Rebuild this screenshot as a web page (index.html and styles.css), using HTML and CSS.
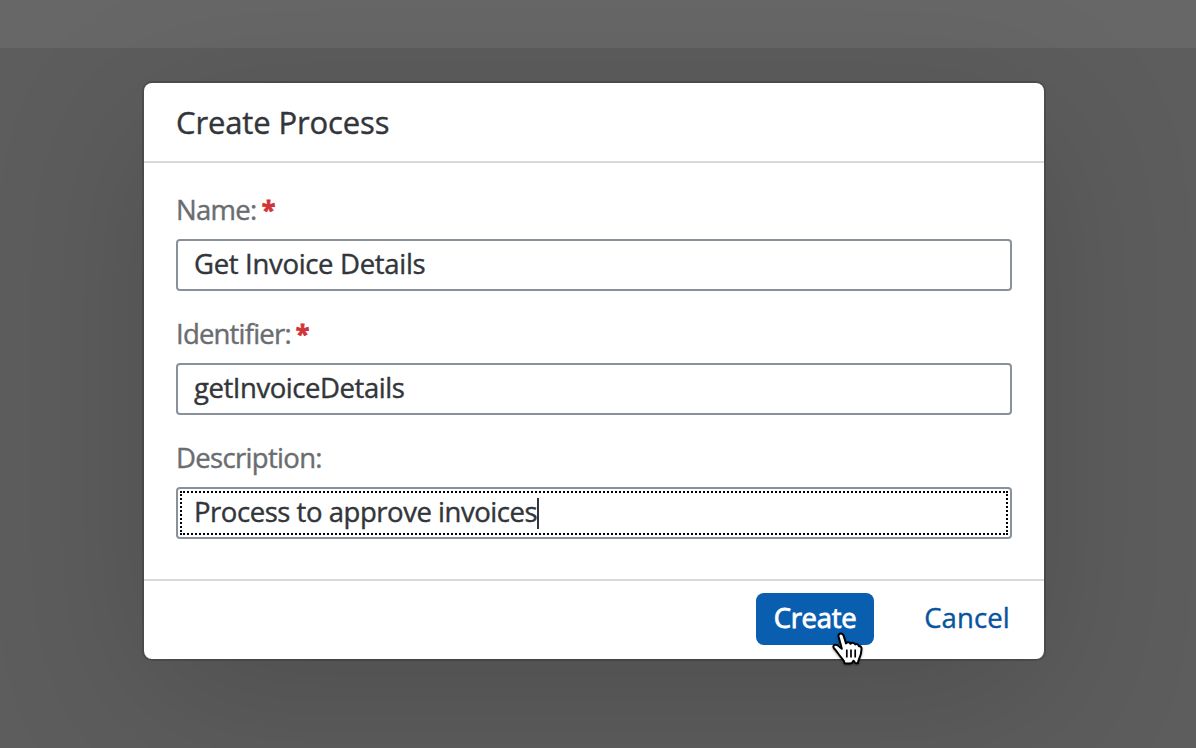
FILE: index.html
```html
<!DOCTYPE html>
<html lang="en">
<head>
<meta charset="utf-8">
<title>Create Process</title>
<link rel="stylesheet" href="styles.css">
</head>
<body>
<div class="shell-bar"></div>
<main class="page">
  <section class="dialog" role="dialog" aria-labelledby="title">
    <header class="dialog-header"><h1 class="title" id="title">Create Process</h1></header>
    <div class="dialog-body">
      <div class="field">
        <div class="label"><span class="text-name">Name:</span><span class="required">*</span></div>
        <div class="input"><span class="value value-name">Get Invoice Details</span></div>
      </div>
      <div class="field">
        <div class="label"><span class="text-identifier">Identifier:</span><span class="required">*</span></div>
        <div class="input"><span class="value value-identifier">getInvoiceDetails</span></div>
      </div>
      <div class="field">
        <div class="label"><span class="text-description">Description:</span></div>
        <div class="input focused"><span class="value value-description">Process to approve invoices</span><span class="caret"></span></div>
      </div>
    </div>
    <footer class="dialog-footer">
      <div class="button primary"><span class="text-create">Create</span>
        <svg class="pointer" width="38" height="42" viewBox="0 0 38 42">
          <path d="M12.800 5.500C14.500 5.500 15.300 6.700 15.800 8.300L18 15.400C19 13.700 21.800 13.900 22.500 15.800C23.800 14.300 26.600 14.700 27.300 16.500C28.700 15.600 30.600 16.400 31 18.200C32.800 17.800 33.600 19.200 33.500 21.200C33.300 25.300 32.800 27 31.600 29.600C30.800 31.400 30 32.800 30 35C28.700 35.500 27.500 35.300 26.900 34.500C26.200 33.500 25.900 32.800 25.500 32.800S24.800 34.500 23.800 35C21.600 35.600 19 35.700 16.600 35.200C16.600 33 15.200 32 13.900 30.400C11.200 27.300 9.700 24.700 7.400 21.900C5.800 20 5 19.500 5.400 18.200C6 16.300 8.600 16.400 10.600 18L13.800 20.800L10.700 9C10.100 7.200 11 5.500 12.800 5.500Z" fill="#fff" stroke="#000" stroke-width="2" stroke-linejoin="round"/>
          <path d="M18.800 21.500v8M23 21.500v8M27.200 21.500v8" stroke="#000" stroke-width="1.700" fill="none"/>
        </svg>
      </div>
      <div class="button"><span class="text-cancel">Cancel</span></div>
    </footer>
  </section>
</main>
</body>
</html>
```
FILE: styles.css
```css
* { box-sizing: border-box; }
body {
  margin: 0;
  height: 748px;
  overflow: hidden;
  background: #5d5d5d;
  font-family: "Open Sans", sans-serif;
  font-size: 27.5px;
  color: #32363a;
  -webkit-text-stroke: .4px currentColor;
}
.shell-bar { height: 48px; background: #676767; }
.page { display: flex; padding: 35px 0 0 144px; }
.dialog {
  width: 900px;
  height: 576px;
  display: flex;
  flex-direction: column;
  background: #fff;
  border-radius: 8px;
  box-shadow: 0 0 0 2px rgba(0,0,0,.15), 0 40px 160px rgba(0,0,0,.16);
}
.dialog-header { height: 80px; padding: 0 32px; border-bottom: 2px solid #d9d9d9; }
.title { margin: 0; font-size: 31px; font-weight: 400; line-height: 78px; letter-spacing: -.12px; white-space: nowrap; }
.dialog-body { flex: 1; padding: 24px 32px 0; display: flex; flex-direction: column; gap: 20px; }
.label { height: 52px; line-height: 46px; color: #6a6d70; display: flex; gap: 5px; white-space: nowrap; }
.text-name { letter-spacing: -.7px; }
.text-identifier { letter-spacing: -.8px; }
.text-description { letter-spacing: -.68px; }
.required { color: #d13438; font-size: 25px; line-height: 44px; font-weight: 700; -webkit-text-stroke: .8px currentColor; }
.input { height: 52px; display: flex; align-items: center; padding-left: 16px; border: 2px solid #89919a; border-radius: 4px; position: relative; white-space: nowrap; }
.value { padding-bottom: 4px; }
.value-name { letter-spacing: -.32px; }
.value-identifier { letter-spacing: -.45px; }
.value-description { letter-spacing: -.46px; }
.focused::after { content: ""; position: absolute; inset: 2px; border: 2px dotted #000; }
.caret { width: 2px; height: 31px; background: #32363a; }
.dialog-footer { height: 80px; border-top: 2px solid #d9d9d9; padding: 12px 16px 0 0; display: flex; justify-content: flex-end; gap: 32px; }
.button { height: 52px; width: 122px; padding-bottom: 3px; border-radius: 8px; display: flex; align-items: center; justify-content: center; color: #0854a0; position: relative; }
.primary { width: 118px; background: #0a5eb0; color: #fff; -webkit-text-stroke: .8px currentColor; }
.text-create { letter-spacing: -.3px; }
.text-cancel { letter-spacing: .1px; }
.pointer { position: absolute; left: 72px; top: 35px; filter: drop-shadow(0 1px 1px rgba(0,0,0,.4)); }
```
